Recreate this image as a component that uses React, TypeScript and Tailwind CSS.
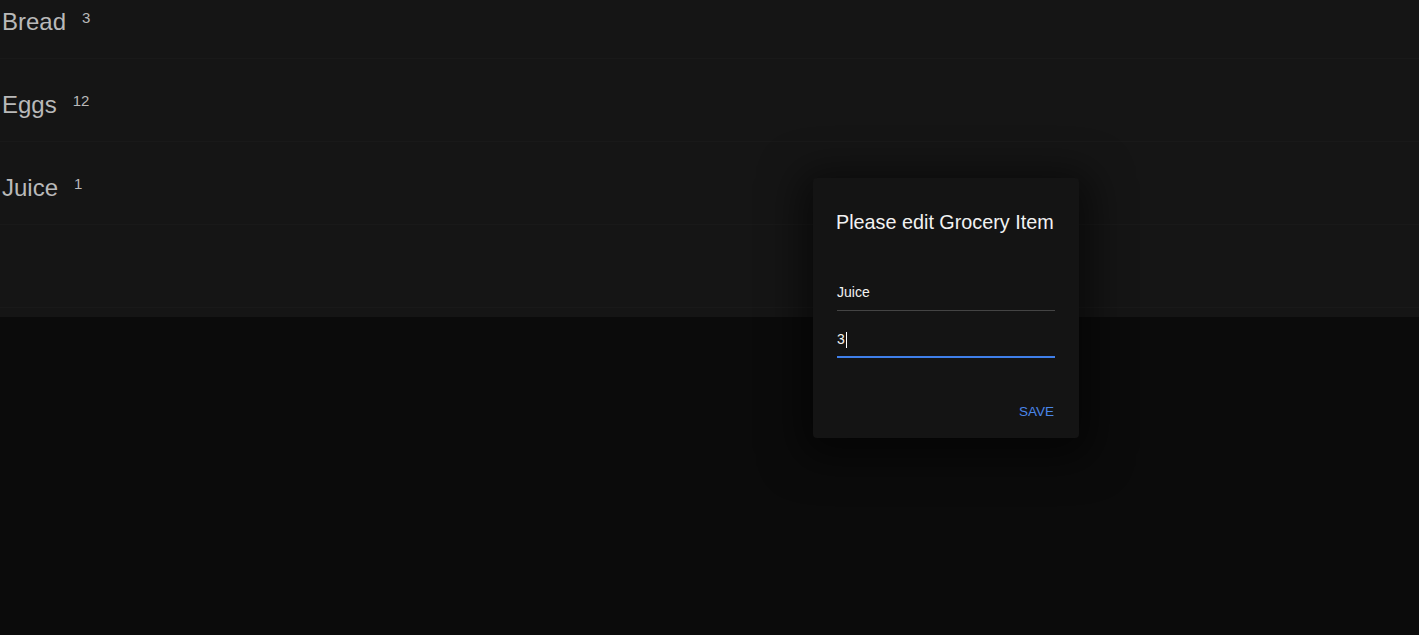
import React from 'react';

const items = [
  { name: 'Bread', qty: 3 },
  { name: 'Eggs', qty: 12 },
  { name: 'Juice', qty: 1 },
];

export default function App() {
  return (
    <div
      className="relative h-[635px] w-full overflow-hidden bg-[#0b0b0b]"
      style={{ fontFamily: '"Liberation Sans", Arial, sans-serif' }}
    >
      <div className="h-[317px] overflow-hidden bg-[#151515]">
        <ul className="-mt-[24px]">
          {items.map((item) => (
            <li key={item.name} className="flex h-[83px] items-start border-b border-[#191919] pt-[34px] pl-[2px]">
              <span className="text-[24px] leading-none text-[#b9b9b9]">{item.name}</span>
              <span className="ml-[16px] text-[15px] leading-none text-[#b9b9b9]">{item.qty}</span>
            </li>
          ))}
          <li className="h-[83px] border-b border-[#191919]" />
        </ul>
      </div>

      <div className="absolute left-[813px] top-[178px] w-[266px] rounded-[4px] bg-[#141414] pl-[23px] pr-[24px] pt-[33px] pb-[19px] shadow-[0_8px_40px_12px_rgba(0,0,0,0.55)]">
        <h2 className="whitespace-nowrap text-[19.8px] leading-[22px] text-[#f2f2f2]">Please edit Grocery Item</h2>
        <div className="ml-[1px] mt-[51px] border-b border-[#444] pb-[9px] text-[14px] leading-[17px] text-[#f2f2f2]">Juice</div>
        <div className="ml-[1px] mt-[20px] flex items-center border-b-2 border-[#3f7fea] pb-[8px] text-[14px] leading-[17px] text-[#f2f2f2]">
          3<span className="ml-[1px] inline-block h-[16px] w-px bg-white" />
        </div>
        <div className="mt-[46px] flex justify-end">
          <button className="pr-[1px] text-[13.5px] uppercase leading-[15px] text-[#4a86e8]">Save</button>
        </div>
      </div>
    </div>
  );
}
